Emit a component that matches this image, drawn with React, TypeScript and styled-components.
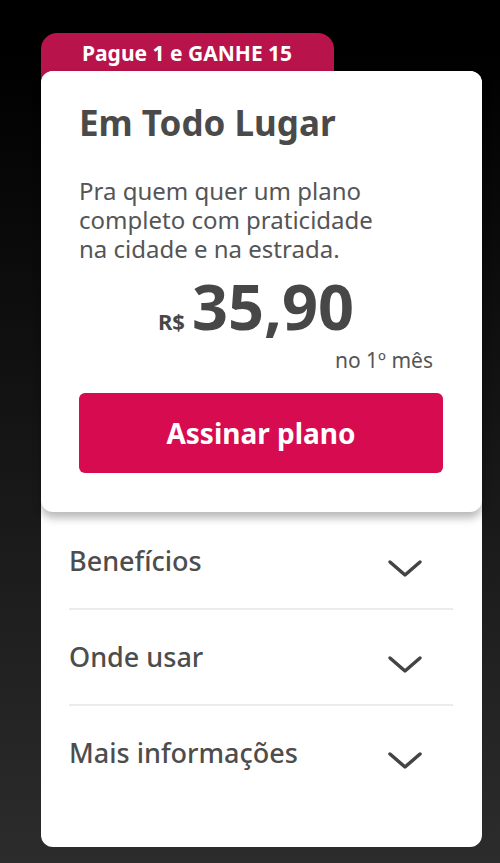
import { createGlobalStyle } from 'styled-components';
import styled from 'styled-components';

const GlobalStyle = createGlobalStyle`
    html, body {
        margin: 0;
        padding: 0;
    }
    body {
        min-height: 863px;
        background: linear-gradient(180deg, #000 6%, #2c2c2c 100%);
        font-family: "Noto Sans", "DejaVu Sans", sans-serif;
    }
`

const Page = styled.div`
    padding: 33px 0 16px 41px;
`

const Wrap = styled.div`
    width: 441px;
`

const Badge = styled.div`
    width: 252px;
    height: 45px;
    padding: 7px 0 0 41px;
    margin-bottom: -14px;
    box-sizing: content-box;
    background: #b8134a;
    border-radius: 16px 16px 0 0;
    color: #fff;
    font-size: 21px;
    font-weight: 700;
    line-height: 26px;
`

const Panel = styled.div`
    position: relative;
    background: #fff;
    border-radius: 12px;
`

const PlanCard = styled.div`
    background: #fff;
    border-radius: 12px;
    padding: 31px 39px 39px 38px;
    box-shadow: 0 6px 9px rgba(0, 0, 0, 0.28);
`

const Title = styled.h2`
    margin: 0;
    color: #4a4a4a;
    font-size: 35px;
    font-weight: 700;
    line-height: 42px;
`

const Description = styled.p`
    margin: 32px 0 0;
    color: #555;
    font-size: 24px;
    line-height: 29px;
`

const PriceRow = styled.div`
    display: flex;
    align-items: baseline;
    justify-content: center;
    gap: 7px;
    margin-top: 12px;
    padding-right: 10px;
    color: #474747;
    font-weight: 700;
`

const Currency = styled.span`
    font-size: 22px;
`

const Amount = styled.span`
    font-size: 63px;
    line-height: 62px;
`

const PriceNote = styled.div`
    margin-top: 11px;
    padding-right: 10px;
    text-align: right;
    color: #555;
    font-size: 21px;
    line-height: 24px;
`

const SubscribeButton = styled.button`
    display: block;
    width: 100%;
    height: 80px;
    margin-top: 21px;
    border: none;
    border-radius: 6px;
    background: #d60b50;
    color: #fff;
    font-family: inherit;
    font-size: 28px;
    font-weight: 700;
    cursor: pointer;
`

const Accordion = styled.div`
    padding: 2px 29px 47px 28px;
`

const Row = styled.div<{ last?: boolean }>`
    display: flex;
    align-items: center;
    justify-content: space-between;
    padding: 30px 0;
    border-bottom: ${({ last }) => (last ? 'none' : '2px solid #ebebeb')};
`

const RowLabel = styled.span`
    color: #4d4d4d;
    font-size: 27px;
    font-weight: 500;
    line-height: 34px;
`

const Chevron = styled.svg`
    flex-shrink: 0;
    margin-right: 30px;
    transform: translateY(8px);
`

const items = ['Benefícios', 'Onde usar', 'Mais informações']

export default function App() {
    return (
        <>
            <GlobalStyle />
            <Page>
                <Wrap>
                    <Badge>Pague 1 e GANHE 15</Badge>
                    <Panel>
                        <PlanCard>
                            <Title>Em Todo Lugar</Title>
                            <Description>
                                Pra quem quer um plano<br />
                                completo com praticidade<br />
                                na cidade e na estrada.
                            </Description>
                            <PriceRow>
                                <Currency>R$</Currency>
                                <Amount>35,90</Amount>
                            </PriceRow>
                            <PriceNote>no 1º mês</PriceNote>
                            <SubscribeButton>Assinar plano</SubscribeButton>
                        </PlanCard>
                        <Accordion>
                            {items.map((label, index) => (
                                <Row key={label} last={index === items.length - 1}>
                                    <RowLabel>{label}</RowLabel>
                                    <Chevron width="36" height="20" viewBox="0 0 36 20">
                                        <polyline points="3,3 18,16 33,3" fill="none" stroke="#444" strokeWidth="3.5" strokeLinecap="round" strokeLinejoin="round" />
                                    </Chevron>
                                </Row>
                            ))}
                        </Accordion>
                    </Panel>
                </Wrap>
            </Page>
        </>
    )
}
